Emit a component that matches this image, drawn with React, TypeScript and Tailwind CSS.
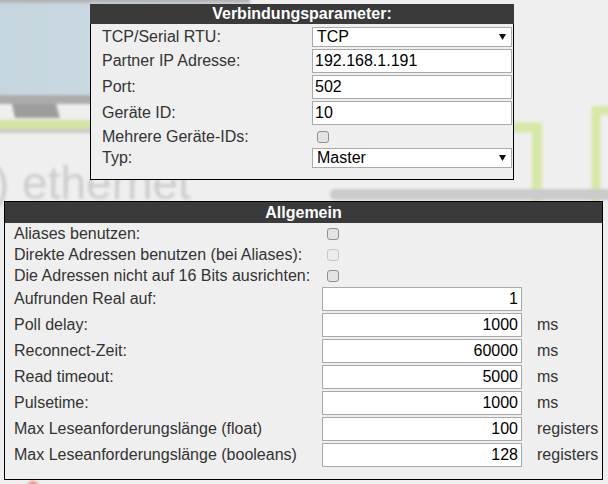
import React from "react";

function Arrow() {
  return (
    <svg className="w-[7px] h-[6px]" viewBox="0 0 7 6"><path d="M0 0h7L3.5 6z" fill="#111" /></svg>
  );
}

function Select({ value }: { value: string }) {
  return (
    <div className="h-[20px] w-[200px] bg-white border border-[#a9a9a9] flex items-center justify-between pl-[4px] pr-[5px] text-[16px] text-black leading-none">
      <span>{value}</span>
      <Arrow />
    </div>
  );
}

function Field({ value, right }: { value: string; right?: boolean }) {
  return (
    <div className={`h-[24px] w-[200px] bg-white border border-[#a9a9a9] flex items-center text-[16px] text-black leading-none ${right ? "justify-end pr-[3px]" : "pl-[2px]"}`}>
      {value}
    </div>
  );
}

function Check({ disabled }: { disabled?: boolean }) {
  return (
    <span className={`block ml-[5px] w-[12px] h-[12px] rounded-[3px] border ${disabled ? "border-[#c6c6c6] bg-[#ececec]" : "border-[#8f8f8f] bg-[#e3e3e3]"}`} />
  );
}

function Backdrop() {
  return (
    <svg className="absolute inset-0 w-[608px] h-[484px]" viewBox="0 0 608 484">
      <defs>
        <filter id="blur"><feGaussianBlur stdDeviation="1.8" /></filter>
        <linearGradient id="screen" x1="0" x2="1" y1="0" y2="0">
          <stop offset="0" stopColor="#c5d6e0" />
          <stop offset="1" stopColor="#cfdbe3" />
        </linearGradient>
      </defs>
      <g filter="url(#blur)">
        <rect x="-10" y="-6" width="260" height="9" fill="#b4b4b4" />
        <rect x="-10" y="3" width="260" height="92" fill="url(#screen)" />
        <rect x="-10" y="95" width="260" height="9" fill="#ababab" />
        <path d="M12 104h44l4 14H15z" fill="#9d9d9d" />
        <rect x="-10" y="120" width="300" height="9" fill="#d3e4a2" />
        <rect x="-10" y="129" width="300" height="4" fill="#c9c9c9" />
        <text x="-6" y="199" fontSize="46" fill="#cdcdcd" fontFamily="Liberation Sans, Arial, sans-serif">) ethernet</text>
        <path d="M505 127.5H537V300" stroke="#d7e8a6" strokeWidth="10" fill="none" />
        <path d="M596 300V110.5H620" stroke="#d7e8a6" strokeWidth="9" fill="none" />
        <rect x="330" y="189" width="300" height="11" rx="5" fill="#cbcbcb" />
        <ellipse cx="33" cy="488" rx="6" ry="7" fill="#f08a8a" />
      </g>
    </svg>
  );
}

const topRows: { label: string; el: React.ReactNode }[] = [
  { label: "TCP/Serial RTU:", el: <Select value="TCP" /> },
  { label: "Partner IP Adresse:", el: <Field value="192.168.1.191" /> },
  { label: "Port:", el: <Field value="502" /> },
  { label: "Geräte ID:", el: <Field value="10" /> },
  { label: "Mehrere Geräte-IDs:", el: <div className="h-[19px] flex items-center"><Check /></div> },
  { label: "Typ:", el: <Select value="Master" /> },
];

const checks = [
  { label: "Aliases benutzen:" },
  { label: "Direkte Adressen benutzen (bei Aliases):", disabled: true },
  { label: "Die Adressen nicht auf 16 Bits ausrichten:" },
];

const fields = [
  { label: "Aufrunden Real auf:", value: "1", unit: "" },
  { label: "Poll delay:", value: "1000", unit: "ms" },
  { label: "Reconnect-Zeit:", value: "60000", unit: "ms" },
  { label: "Read timeout:", value: "5000", unit: "ms" },
  { label: "Pulsetime:", value: "1000", unit: "ms" },
  { label: "Max Leseanforderungslänge (float)", value: "100", unit: "registers" },
  { label: "Max Leseanforderungslänge (booleans)", value: "128", unit: "registers" },
];

export default function App() {
  return (
    <div className="relative w-[608px] h-[484px] overflow-hidden bg-[#efefef] font-['Liberation_Sans',Arial,sans-serif] text-[16px] text-[#333]">
      <Backdrop />
      <div className="relative pt-[4px]">
        {/* Verbindungsparameter */}
        <div className="ml-[90px] w-[424px]">
          <div className="h-[20px] bg-[#3a3a3a] text-white font-bold text-center leading-[20px]">Verbindungsparameter:</div>
          <div className="bg-[#efefef] border-x border-b border-black pl-[11px] pt-[3px] pb-[11px]">
            <div className="grid grid-cols-[210px_200px] gap-y-[2px] items-center">
              {topRows.map((r) => (
                <React.Fragment key={r.label}>
                  <div className="leading-[18px]">{r.label}</div>
                  {r.el}
                </React.Fragment>
              ))}
            </div>
          </div>
        </div>

        {/* Allgemein */}
        <div className="ml-[4px] mt-[21px] w-[599px] border border-black bg-[#efefef]">
          <div className="h-[21px] bg-[#3a3a3a] text-white font-bold text-center leading-[21px]">Allgemein</div>
          <div className="pl-[9px] pt-[1px] pb-[12px]">
            <div className="grid grid-cols-[308px_200px_auto] gap-y-[2px] items-center">
              {checks.map((c) => (
                <React.Fragment key={c.label}>
                  <div className="leading-[18px]">{c.label}</div>
                  <div className="h-[19px] flex items-center"><Check disabled={c.disabled} /></div>
                  <div />
                </React.Fragment>
              ))}
              {fields.map((f) => (
                <React.Fragment key={f.label}>
                  <div className="leading-[18px]">{f.label}</div>
                  <Field value={f.value} right />
                  <div className="pl-[15px] leading-[18px]">{f.unit}</div>
                </React.Fragment>
              ))}
            </div>
          </div>
        </div>
      </div>
    </div>
  );
}
